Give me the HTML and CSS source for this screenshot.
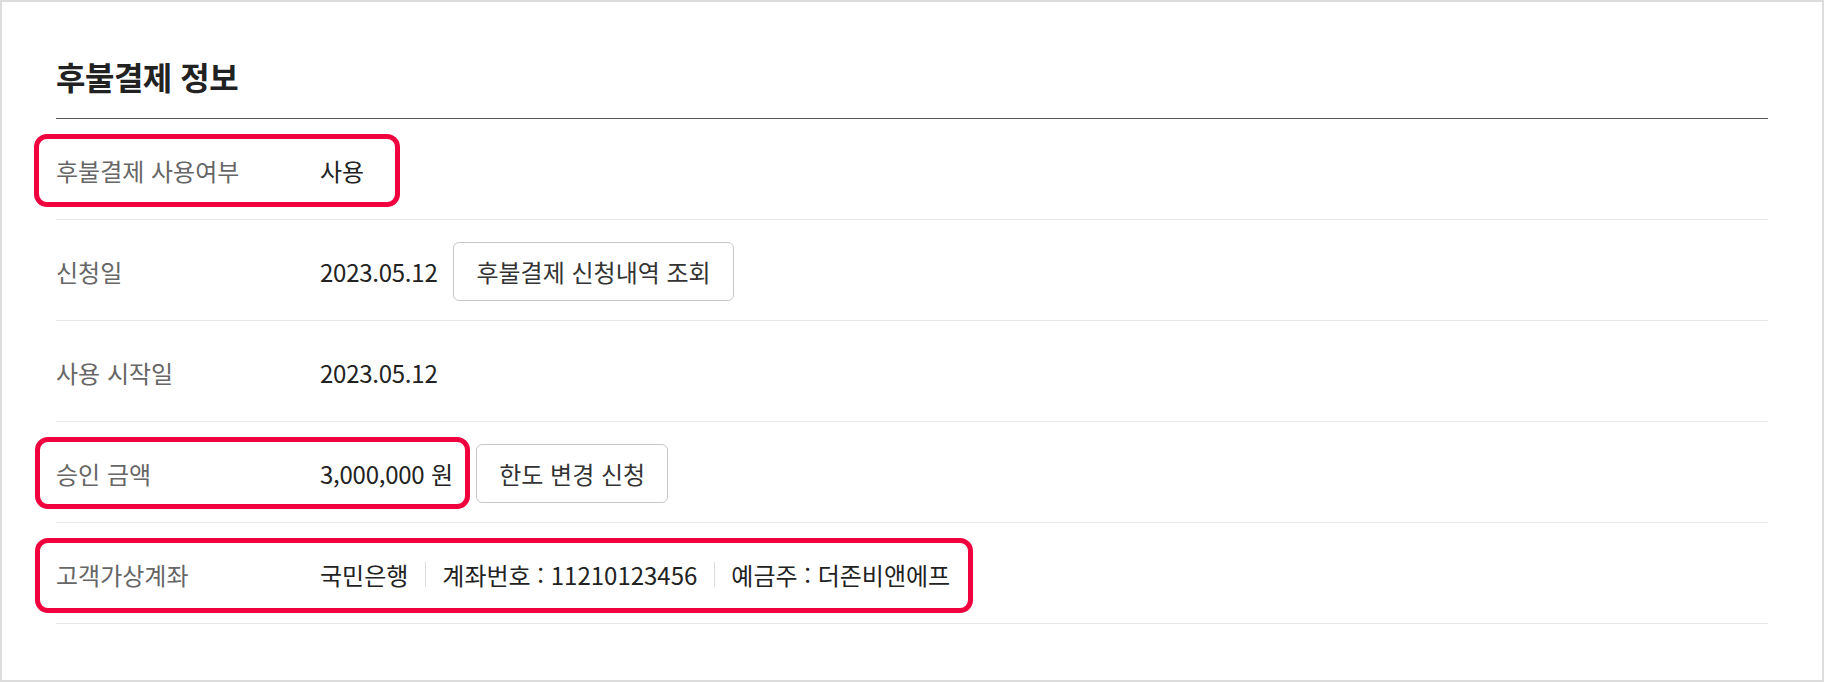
FILE: index.html
```html
<!DOCTYPE html>
<html lang="ko">
<head>
<meta charset="utf-8">
<title>후불결제 정보</title>
<link rel="stylesheet" href="styles.css">
</head>
<body>
<div class="frame">
  <h2 class="title">후불결제 정보</h2>
  <div class="list">
    <div class="row">
      <div class="label">후불결제 사용여부</div>
      <div class="value">사용</div>
      <span class="mark mark-use"></span>
    </div>
    <div class="row">
      <div class="label">신청일</div>
      <div class="value"><span class="num">2023.05.12</span><button class="btn" type="button">후불결제 신청내역 조회</button></div>
    </div>
    <div class="row">
      <div class="label">사용 시작일</div>
      <div class="value"><span class="num">2023.05.12</span></div>
    </div>
    <div class="row">
      <div class="label">승인 금액</div>
      <div class="value"><span class="num">3,000,000</span>&nbsp;원<button class="btn btn-wide-gap" type="button">한도 변경 신청</button></div>
      <span class="mark mark-amount"></span>
    </div>
    <div class="row">
      <div class="label">고객가상계좌</div>
      <div class="value">
        <span class="part">국민은행</span>
        <span class="part">계좌번호 : 11210123456</span>
        <span class="part">예금주 : 더존비앤에프</span>
      </div>
      <span class="mark mark-account"></span>
    </div>
  </div>
</div>
</body>
</html>
```

FILE: styles.css
```css
* { box-sizing: border-box; }
html, body { margin: 0; padding: 0; background: #fff; }
body {
  font-family: "Noto Sans CJK KR", "Noto Sans", sans-serif;
  color: #222;
}
.frame {
  width: 1824px;
  height: 682px;
  border: 2px solid #dcdcdc;
  padding: 0 54px;
  overflow: hidden;
}
.title {
  margin: 0;
  padding-top: 51px;
  height: 116px;
  font-size: 32px;
  line-height: 46px;
  font-weight: 700;
  color: #222;
  letter-spacing: -0.5px;
}
.list {
  border-top: 1px solid #555;
}
.row {
  position: relative;
  display: flex;
  align-items: center;
  height: 101px;
  border-bottom: 1px solid #e8e8e8;
  font-size: 24px;
  line-height: 34px;
  padding-top: 3px;
}
.label {
  width: 264px;
  flex: none;
  color: #666;
}
.value {
  display: flex;
  align-items: center;
  color: #222;
  white-space: pre;
}
.num { letter-spacing: -0.25px; }
.btn {
  margin-left: 16px;
  height: 59px;
  padding: 0 22px;
  border: 1px solid #c8c8c8;
  border-radius: 6px;
  background: #fff;
  font-family: inherit;
  font-size: 24px;
  color: #333;
  cursor: pointer;
}
.btn-wide-gap { margin-left: 23px; }
.part {
  display: flex;
  align-items: center;
}
.part + .part::before {
  content: "";
  display: block;
  width: 1px;
  height: 25px;
  margin: 0 16px 0 17px;
  background: #dddddd;
}
.mark {
  position: absolute;
  top: 15px;
  left: -22px;
  border: 5px solid #f0003c;
  border-radius: 13px;
  pointer-events: none;
}
.mark-use { width: 366px; height: 73px; }
.mark-amount { left: -21px; width: 435px; height: 72px; }
.mark-account { left: -21px; width: 938px; height: 75px; }
```
